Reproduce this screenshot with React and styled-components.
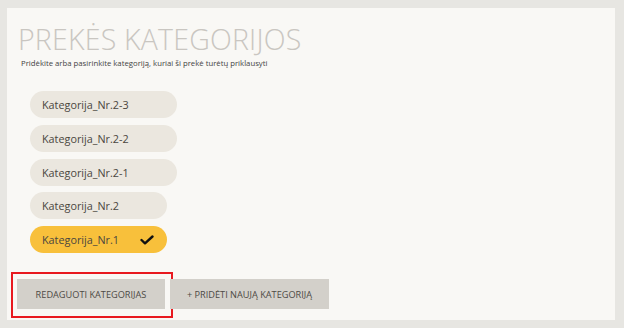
import React from "react";
import styled, { createGlobalStyle } from "styled-components";

const Global = createGlobalStyle`
  html, body { margin: 0; padding: 0; background: #e7e6e2; }
  body { font-family: "Open Sans", "Noto Sans", sans-serif; }
  * { box-sizing: border-box; }
`;

const Page = styled.div`
  width: 624px;
  height: 328px;
  padding: 8px 9px 8px 7px;
`;

const Panel = styled.div`
  background: #f9f8f5;
  height: 312px;
  padding: 13px 0 0 0;
  display: flex;
  flex-direction: column;
`;

const Title = styled.h1`
  margin: 0 0 0 11px;
  font-family: "Open Sans", sans-serif;
  font-weight: 300;
  font-size: 28.5px;
  line-height: 36px;
  color: #c9c6c1;
  letter-spacing: 0.2px;
`;

const Subtitle = styled.p`
  margin: 1px 0 0 14px;
  font-size: 7.75px;
  line-height: 11px;
  color: #444;
`;

const List = styled.div`
  display: flex;
  flex-direction: column;
  gap: 6.75px;
  margin: 22px 0 0 23px;
`;

const Pill = styled.div`
  width: ${(p) => p.$w}px;
  height: 27px;
  border-radius: 14px;
  background: ${(p) => (p.$active ? "#f8c03b" : "#ebe7df")};
  display: flex;
  align-items: center;
  justify-content: space-between;
  padding: 0 13px 0 12px;
  font-size: 10.8px;
  color: #4a4640;
`;

const Actions = styled.div`
  display: flex;
  margin: 19px 0 0 4px;
`;

const Highlight = styled.div`
  border: 2px solid #e8191f;
  padding: 5px 6px 7px 4px;
`;

const Button = styled.button`
  height: 30px;
  width: ${(p) => p.$w}px;
  border: none;
  background: #d3d0ca;
  font-family: "Open Sans", sans-serif;
  font-size: 9.2px;
  color: #4d4a45;
  text-transform: uppercase;
  padding: 0;
  margin-top: ${(p) => (p.$mt ? p.$mt : 0)}px;
  margin-left: ${(p) => (p.$ml ? p.$ml : 0)}px;
`;

const Check = () => (
  <svg width="14" height="10" viewBox="0 0 14 10">
    <path d="M1.5 5 L5 8.3 L12.5 1.5" fill="none" stroke="#111" strokeWidth="2.4" strokeLinecap="round" strokeLinejoin="round" />
  </svg>
);

const cats = [
  { name: "Kategorija_Nr.2-3", w: 147 },
  { name: "Kategorija_Nr.2-2", w: 147 },
  { name: "Kategorija_Nr.2-1", w: 147 },
  { name: "Kategorija_Nr.2", w: 137 },
  { name: "Kategorija_Nr.1", w: 137, active: true },
];

export default function App() {
  return (
    <>
      <Global />
      <Page>
        <Panel>
          <Title>PREKĖS KATEGORIJOS</Title>
          <Subtitle>Pridėkite arba pasirinkite kategoriją, kuriai ši prekė turėtų priklausyti</Subtitle>
          <List>
            {cats.map((c) => (
              <Pill key={c.name} $w={c.w} $active={c.active}>
                <span>{c.name}</span>
                {c.active && <Check />}
              </Pill>
            ))}
          </List>
          <Actions>
            <Highlight>
              <Button $w={148}>Redaguoti kategorijas</Button>
            </Highlight>
            <Button $w={159} $mt={7} $ml={-3}>+ Pridėti naują kategoriją</Button>
          </Actions>
        </Panel>
      </Page>
    </>
  );
}
